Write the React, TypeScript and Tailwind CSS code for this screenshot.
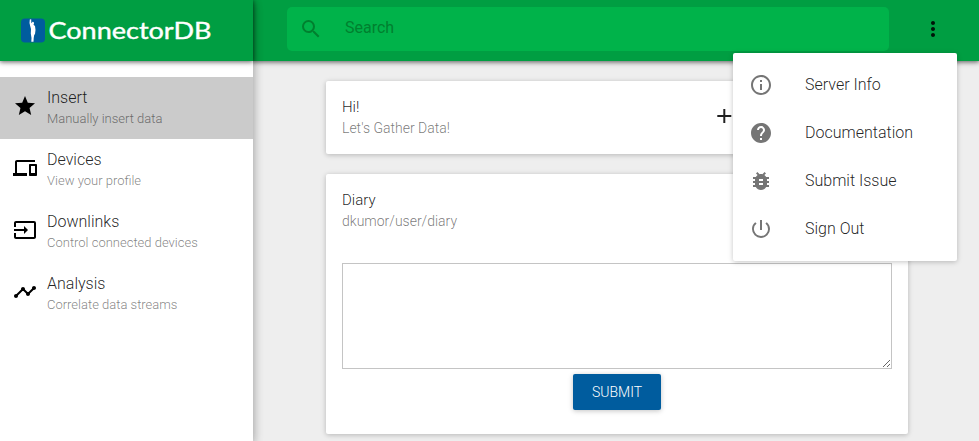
import React from "react";
import {
  MdDevices,
  MdHelp,
  MdInfoOutline,
  MdInput,
  MdMoreVert,
  MdPowerSettingsNew,
  MdSearch,
  MdStar,
  MdTimeline,
} from "react-icons/md";

function BugIcon({ size = 24, className }: { size?: number; className?: string }) {
  return (
    <svg width={size} height={size} viewBox="0 0 24 24" fill="currentColor" className={className}>
      <path d="M20 8h-2.810c-.45-.78-1.070-1.450-1.820-1.960L17 4.410 15.590 3l-2.170 2.170C12.960 5.060 12.490 5 12 5c-.49 0-.96.06-1.410.17L8.410 3 7 4.410l1.620 1.630C7.880 6.550 7.260 7.220 6.810 8H4v2h2.090c-.05.33-.09.66-.09 1v1H4v2h2v1c0 .34.04.67.09 1H4v2h2.810c1.040 1.790 2.970 3 5.190 3s4.150-1.210 5.190-3H20v-2h-2.090c.05-.33.09-.66.09-1v-1h2v-2h-2v-1c0-.34-.04-.67-.09-1H20V8zm-6 8h-4v-2h4v2zm0-4h-4v-2h4v2z" />
    </svg>
  );
}

const navItems = [
  { title: "Insert", detail: "Manually insert data", Icon: MdStar, active: true },
  { title: "Devices", detail: "View your profile", Icon: MdDevices, active: false },
  { title: "Downlinks", detail: "Control connected devices", Icon: MdInput, active: false },
  { title: "Analysis", detail: "Correlate data streams", Icon: MdTimeline, active: false },
];

const menuItems = [
  { label: "Server Info", Icon: MdInfoOutline },
  { label: "Documentation", Icon: MdHelp },
  { label: "Submit Issue", Icon: BugIcon },
  { label: "Sign Out", Icon: MdPowerSettingsNew },
];

function Logo() {
  return (
    <svg width="200" height="36" viewBox="0 -5 200 36" className="block">
      <rect x="0" y="0.5" width="24" height="24" rx="4" fill="#005c9e" />
      <path
        d="M8.800 1.500L10.200 1.300L10.300 4.500L10.800 5.200L11.400 3.800L12.700 4L13 5.500L12.500 6.800L14 8L14.500 12L14 16L13.200 17L12.700 20L12.500 23.800H10.300L10.500 20L9.800 15.500L10 11L9.200 8L8.500 5Z"
        fill="#fff"
      />
      <text
        x="27.500"
        y="21"
        fill="#fff"
        stroke="#fff"
        strokeWidth="0.4"
        fontSize="23"
        fontWeight="400"
        fontFamily="Lato, sans-serif"
        textLength="163"
        lengthAdjust="spacingAndGlyphs"
      >
        ConnectorDB
      </text>
    </svg>
  );
}

function PlusIcon({ className }: { className: string }) {
  return (
    <svg width="24" height="24" viewBox="-0.3 0 24 24" fill="currentColor" className={className}>
      <path d="M19 13h-6v6h-2v-6H5v-2h6V5h2v6h6v2z" />
    </svg>
  );
}

function Sidebar() {
  return (
    <aside className="relative z-10 flex w-[253px] shrink-0 flex-col bg-white shadow-[0_3px_10px_rgba(0,0,0,0.16),0_3px_10px_rgba(0,0,0,0.23)]">
      <div className="flex h-[61px] shrink-0 items-center bg-[#009e42] pl-[21px] shadow-[0_1px_6px_rgba(0,0,0,0.3),0_1px_4px_rgba(0,0,0,0.4)]">
        <Logo />
      </div>
      <nav className="mt-4 flex flex-col">
        {navItems.map(({ title, detail, Icon, active }) => (
          <a
            key={title}
            className={`flex h-[62px] items-center pl-[13px] ${active ? "bg-[#cbcbcb]" : ""}`}
          >
            <Icon size={24} className="-mt-1 text-black" />
            <span className="ml-[10px] flex flex-col">
              <span className="text-base leading-[21px] text-black/87">{title}</span>
              <span className="text-[13px] leading-[21px] text-black/50">{detail}</span>
            </span>
          </a>
        ))}
      </nav>
    </aside>
  );
}

function TopBar() {
  return (
    <header className="relative flex h-[61px] shrink-0 items-start bg-[#009e42] pt-[7px] pl-[34px] shadow-[0_1px_6px_rgba(0,0,0,0.3),0_1px_4px_rgba(0,0,0,0.4)]">
      <div className="flex h-11 w-[602px] items-center rounded-[5px] bg-[#00b34a] pl-3">
        <MdSearch size={24} className="text-[#00802f]" />
        <input
          placeholder="Search"
          className="ml-[22px] h-10 flex-1 bg-transparent pb-1 text-base font-normal outline-none placeholder:text-[#00802f]"
        />
      </div>
      <button className="mt-[10px] ml-8 text-black/87">
        <MdMoreVert size={24} />
      </button>
      <ul className="absolute top-[53px] right-[22px] w-56 rounded-[2px] bg-white py-2 shadow-[0_1px_6px_rgba(0,0,0,0.12),0_1px_4px_rgba(0,0,0,0.12)]">
        {menuItems.map(({ label, Icon }) => (
          <li key={label} className="flex h-12 items-center pl-4">
            <Icon size={24} className="text-[#757575]" />
            <span className="ml-8 text-base leading-[46px] text-black/87">{label}</span>
          </li>
        ))}
      </ul>
    </header>
  );
}

function CardTitle({ title, detail }: { title: string; detail: string }) {
  return (
    <div className="flex flex-col">
      <span className="text-[15px] leading-5 text-black/87">{title}</span>
      <span className="text-sm leading-[22px] text-black/54">{detail}</span>
    </div>
  );
}

const cardClass =
  "w-[582px] rounded-[2px] bg-white px-4 pt-4 shadow-[0_1px_6px_rgba(0,0,0,0.12),0_1px_4px_rgba(0,0,0,0.12)]";

export default function App() {
  return (
    <div className="flex h-[441px] w-[979px] overflow-hidden bg-[#eeeeee] font-['Roboto',sans-serif] font-light">
      <Sidebar />
      <div className="flex flex-1 flex-col">
        <div className="relative z-[1]">
          <TopBar />
        </div>
        <main className="flex flex-col gap-5 pt-5 pl-[73px]">
          <section className={`${cardClass} flex h-[73px] justify-between`}>
            <CardTitle title="Hi!" detail="Let's Gather Data!" />
            <PlusIcon className="mt-[7px] mr-[156px] text-black/87" />
          </section>
          <section className={`${cardClass} flex h-[260px] flex-col`}>
            <CardTitle title="Diary" detail="dkumor/user/diary" />
            <textarea className="mt-[31px] h-[106px] w-full shrink-0 border border-[#c4c4c4] bg-white outline-none" />
            <button className="mt-[5px] h-9 w-[88px] shrink-0 self-center rounded-[2px] bg-[#005c9e] text-sm text-white shadow-[0_1px_6px_rgba(0,0,0,0.12),0_1px_4px_rgba(0,0,0,0.12)]">
              SUBMIT
            </button>
          </section>
        </main>
      </div>
    </div>
  );
}
